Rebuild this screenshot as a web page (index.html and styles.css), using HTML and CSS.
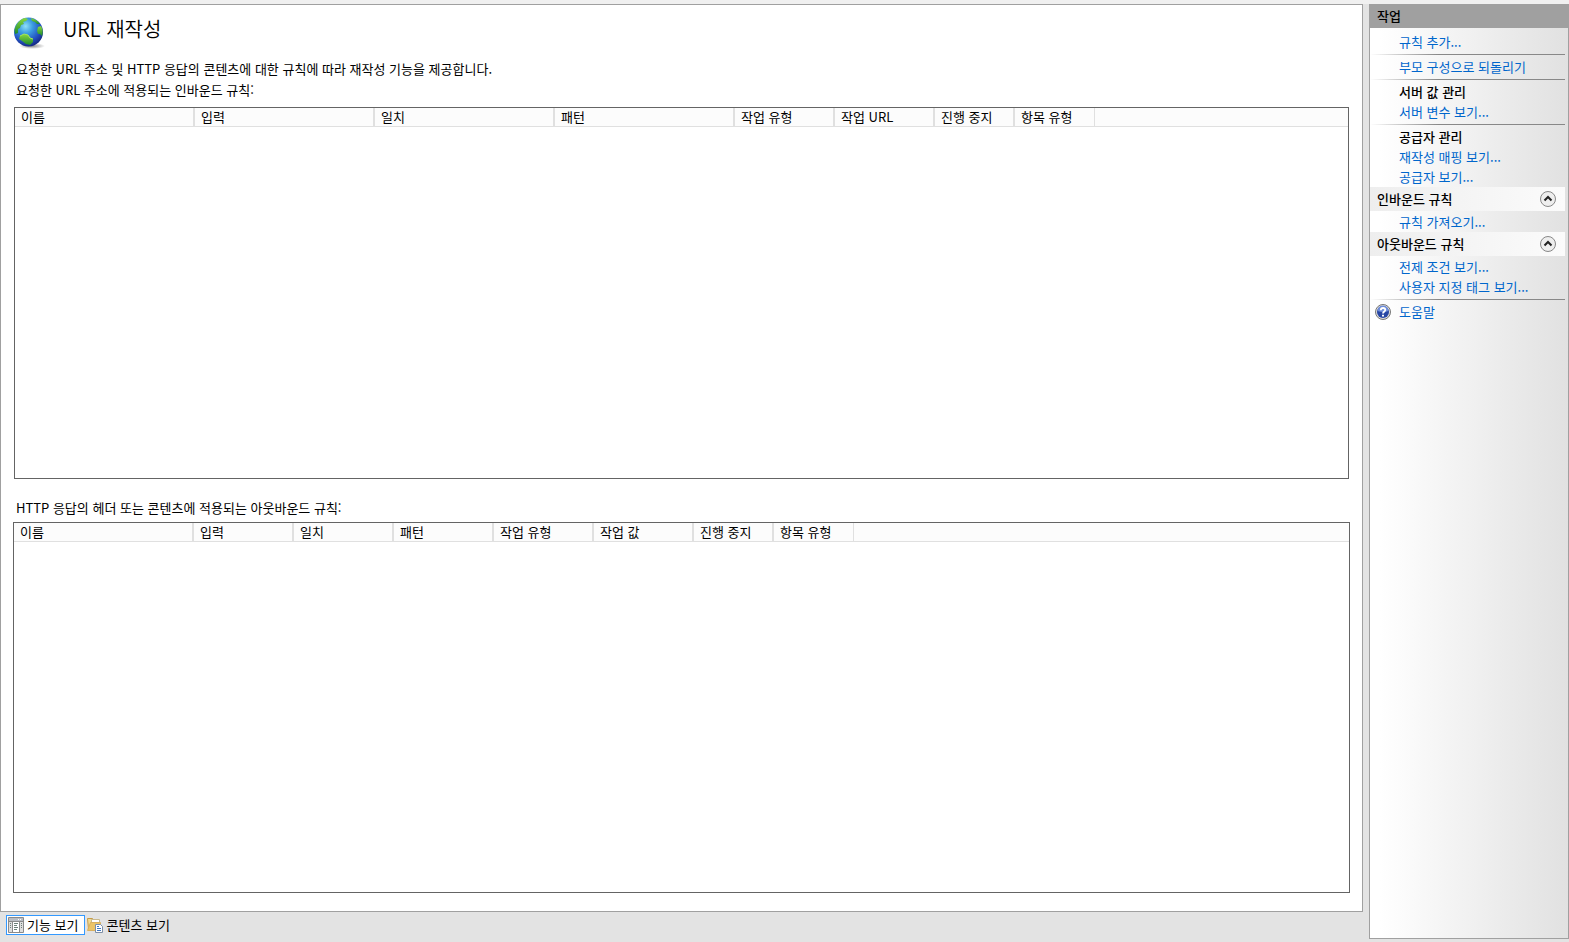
FILE: index.html
```html
<!DOCTYPE html>
<html lang="ko">
<head>
  <meta charset="UTF-8" />
  <meta name="viewport" content="width=device-width, initial-scale=1.0"/>
  <title>URL 재작성</title>
  <link rel="stylesheet" href="styles.css">
</head>
<body>
  <div class="workspace">
    <main class="feature">
      <div class="title">
        <svg class="globe" viewBox="0 0 32 34" aria-hidden="true">
          <defs>
            <radialGradient id="sea" cx="40%" cy="30%" r="70%">
              <stop offset="0" stop-color="#8fe0f8"/>
              <stop offset="0.35" stop-color="#3c9de0"/>
              <stop offset="0.75" stop-color="#2350c0"/>
              <stop offset="1" stop-color="#152c86"/>
            </radialGradient>
            <radialGradient id="shade">
              <stop offset="0" stop-color="#555" stop-opacity="0.7"/>
              <stop offset="1" stop-color="#555" stop-opacity="0"/>
            </radialGradient>
            <linearGradient id="land" x1="0" y1="0" x2="0" y2="1">
              <stop offset="0" stop-color="#8ad83e"/>
              <stop offset="1" stop-color="#1d8a2c"/>
            </linearGradient>
          </defs>
          <ellipse cx="19" cy="30" rx="13" ry="3" fill="url(#shade)"/>
          <circle cx="15.500" cy="16" r="14.500" fill="url(#sea)"/>
          <path fill="url(#land)" d="M1.500 14C3 8 7 3 12 2L15 3 13 5 10 6 11 8 8 9 7 12 5 13 5 17 2 18Z"/>
          <path fill="url(#land)" d="M18 2C22 3 25 5 27 8L24 8 22 6 19 5Z"/>
          <path fill="url(#land)" d="M25 11L28 10C30 13 30 17 29 20L27 18 25 18 24 15Z"/>
          <path fill="url(#land)" d="M7 20L11 18 15 19 17 22 20 23 20 26 17 29 13 28 9 25 6 23Z"/>
          <path fill="none" stroke="#a4e65a" stroke-width="1" d="M7 20L11 18 15 19 17 22 20 23"/>
        </svg>
        <h1>URL 재작성</h1>
      </div>
      <p>요청한 URL 주소 및 HTTP 응답의 콘텐츠에 대한 규칙에 따라 재작성 기능을 제공합니다.</p>
      <p id="inbound-label">요청한 URL 주소에 적용되는 인바운드 규칙:</p>
      <div class="list inbound">
        <table aria-labelledby="inbound-label">
          <thead>
            <tr>
              <th class="wide">이름</th>
              <th class="wide">입력</th>
              <th class="wide">일치</th>
              <th class="wide">패턴</th>
              <th class="mid">작업 유형</th>
              <th class="mid">작업 URL</th>
              <th class="narrow">진행 중지</th>
              <th class="narrow">항목 유형</th>
              <td></td>
            </tr>
          </thead>
        </table>
      </div>
      <p id="outbound-label" class="second">HTTP 응답의 헤더 또는 콘텐츠에 적용되는 아웃바운드 규칙:</p>
      <div class="list">
        <table aria-labelledby="outbound-label">
          <thead>
            <tr>
              <th class="wide">이름</th>
              <th class="mid">입력</th>
              <th class="mid">일치</th>
              <th class="mid">패턴</th>
              <th class="mid">작업 유형</th>
              <th class="mid">작업 값</th>
              <th class="narrow">진행 중지</th>
              <th class="narrow">항목 유형</th>
              <td></td>
            </tr>
          </thead>
        </table>
      </div>
    </main>

    <div class="views">
      <button type="button" class="view active">
        <svg viewBox="0 0 16 16" aria-hidden="true">
          <path fill="#fff" stroke="#8a8a8a" d="M.5 .5h15v15H.5z"/>
          <path fill="#b9bdc4" d="M1 1h14v3H1z"/>
          <path fill="#fff" d="M10 2h1v1h-1zM12 2h1v1h-1z"/>
          <path fill="#dedede" d="M1 4h3v11H1zM12 4h3v11h-3z"/>
          <path stroke="#8a8a8a" d="M4.500 4v11M11.500 4v11M1 4.500h14"/>
          <path stroke="#6d7f78" d="M6 6.500h4M6 8.500h3M6 10.500h4M6 12.500h3M2 6.500h1M2 8.500h1M2 10.500h1M13 6.500h1M13 8.500h1M13 10.500h1"/>
        </svg>
        <span>기능 보기</span>
      </button>
      <button type="button" class="view">
        <svg viewBox="0 0 16 16" aria-hidden="true">
          <path fill="#f4dc94" stroke="#c59b48" d="M.5 1.500h5l1 1.500h3v9.500H1.500z"/>
          <path fill="#fff" stroke="#c9b98c" d="M4.500 2.500h8v4h-8z"/>
          <path fill="#ecc467" stroke="#d9b060" d="M.5 13.500L3.500 5.500h10v8z"/>
          <path fill="#fff" stroke="#7c8ea6" d="M8.500 7.500h5l2 2v6h-7z"/>
          <path stroke="#3e78c4" d="M10 9.500h2M10 11.500h4M10 13.500h4"/>
        </svg>
        <span>콘텐츠 보기</span>
      </button>
    </div>
  </div>

  <aside class="actions">
    <h2>작업</h2>
    <div class="group first">
      <a href="#">규칙 추가...</a>
      <hr>
      <a href="#">부모 구성으로 되돌리기</a>
      <hr>
      <h3>서버 값 관리</h3>
      <a href="#">서버 변수 보기...</a>
      <hr>
      <h3>공급자 관리</h3>
      <a href="#">재작성 매핑 보기...</a>
      <a href="#">공급자 보기...</a>
    </div>
    <div class="section">
      <h3>인바운드 규칙</h3>
      <button type="button" aria-label="인바운드 규칙 접기">
        <svg viewBox="0 0 16 16" aria-hidden="true">
          <circle cx="8" cy="8" r="7.500" fill="#eee" stroke="#888"/>
          <path fill="none" stroke="#222" stroke-width="2" d="M4.500 9.500L8 6l3.500 3.500"/>
        </svg>
      </button>
    </div>
    <div class="group">
      <a href="#">규칙 가져오기...</a>
    </div>
    <div class="section">
      <h3>아웃바운드 규칙</h3>
      <button type="button" aria-label="아웃바운드 규칙 접기">
        <svg viewBox="0 0 16 16" aria-hidden="true">
          <circle cx="8" cy="8" r="7.500" fill="#eee" stroke="#888"/>
          <path fill="none" stroke="#222" stroke-width="2" d="M4.500 9.500L8 6l3.500 3.500"/>
        </svg>
      </button>
    </div>
    <div class="group">
      <a href="#">전제 조건 보기...</a>
      <a href="#">사용자 지정 태그 보기...</a>
      <hr>
      <a href="#" class="help">
        <svg viewBox="0 0 16 16" aria-hidden="true">
          <circle cx="8" cy="8" r="7.500" fill="#ddd" stroke="#777"/>
          <circle cx="8" cy="8" r="6" fill="#2746a4"/>
          <path fill="#6d8ddb" d="M2.500 7a5.500 5.500 0 0 1 11 0q-5.500 2-11 0z"/>
          <path fill="none" stroke="#fff" stroke-width="1.800" d="M5.800 6.200c0-3 4.500-2.800 4.500-.2C10.300 7.500 8 7.600 8 9.600"/>
          <path fill="#fff" d="M7 10.700h2v1.800H7z"/>
        </svg>
        <span>도움말</span>
      </a>
    </div>
  </aside>
</body>
</html>
```
FILE: styles.css
```css
* { box-sizing: border-box; }
body {
  margin: 0;
  min-height: 100vh;
  display: flex;
  gap: 6px;
  padding-bottom: 3px;
  border-top: 4px solid #f0f0f0;
  background: #e3e3e3;
  color: #000;
  font-family: "Noto Sans CJK KR", sans-serif;
  font-size: 13px;
  line-height: 20px;
}
h1, h2, h3, p {
  margin: 0;
}
button {
  padding: 0;
  border: none;
  background: none;
  color: inherit;
  font: inherit;
}
svg {
  display: block;
  flex: none;
  width: 16px;
  height: 16px;
}
.workspace {
  flex: 1;
  display: flex;
  flex-direction: column;
}
.feature {
  flex: 1;
  display: flex;
  flex-direction: column;
  padding: 10px 12px 18px 12px;
  border: 1px solid #a0a0a0;
  background: #fff;
}
.title {
  display: flex;
  align-items: flex-start;
  gap: 18px;
  height: 43px;
}
.globe {
  width: 32px;
  height: 34px;
  margin-top: 1px;
}
h1 {
  font-size: 20px;
  font-weight: 350;
  line-height: 28px;
}
p {
  padding-left: 3px;
  line-height: 21px;
}
.second {
  margin-top: 18px;
}
.list {
  flex: 1;
  margin-top: 4px;
  border: 1px solid #646464;
}
.inbound {
  margin: 7px 1px 0;
}
table {
  width: 100%;
  table-layout: fixed;
  border-collapse: separate;
  border-spacing: 0;
}
th, td {
  height: 19px;
  padding: 0 0 0 6px;
  border-bottom: 1px solid #e0e0e0;
  background: #fcfcfc;
  font-weight: normal;
  line-height: 18px;
  text-align: left;
  white-space: nowrap;
}
th {
  border-right: 2px solid #e0e0e0;
}
th:last-of-type {
  border-right-width: 1px;
}
.wide { width: 180px; }
.mid { width: 100px; }
.narrow { width: 80px; }
.views {
  display: flex;
  gap: 2px;
  padding: 3px 6px 4px;
}
.view {
  display: flex;
  align-items: center;
  gap: 3px;
  height: 20px;
}
.active {
  padding: 0 6px 0 1px;
  border: 1px solid #3399ff;
  background: #fff;
}
.actions {
  width: 200px;
  border: 1px solid #a0a0a0;
  border-top: none;
  background: linear-gradient(to right, #fff 5%, #e1e1e1);
}
h2 {
  padding-left: 7px;
  background: #a0a0a0;
  font-size: 13px;
  font-weight: 500;
  line-height: 24px;
}
h3 {
  font-size: 13px;
  font-weight: 500;
}
.group {
  padding: 1px 3px 0 0;
}
.first {
  padding-top: 4px;
}
.group a, .group h3 {
  display: block;
  padding-left: 29px;
}
a {
  color: #0066cc;
  text-decoration: none;
}
hr {
  height: 1px;
  margin: 2px 0;
  border: none;
  background: linear-gradient(to right, transparent, #888 35%);
}
.section {
  display: flex;
  align-items: center;
  justify-content: space-between;
  height: 24px;
  margin-right: 3px;
  padding: 0 9px 0 7px;
  background: linear-gradient(to right, #eee, #fbfbfb);
}
.group .help {
  display: flex;
  align-items: center;
  gap: 8px;
  padding-left: 5px;
}
```
